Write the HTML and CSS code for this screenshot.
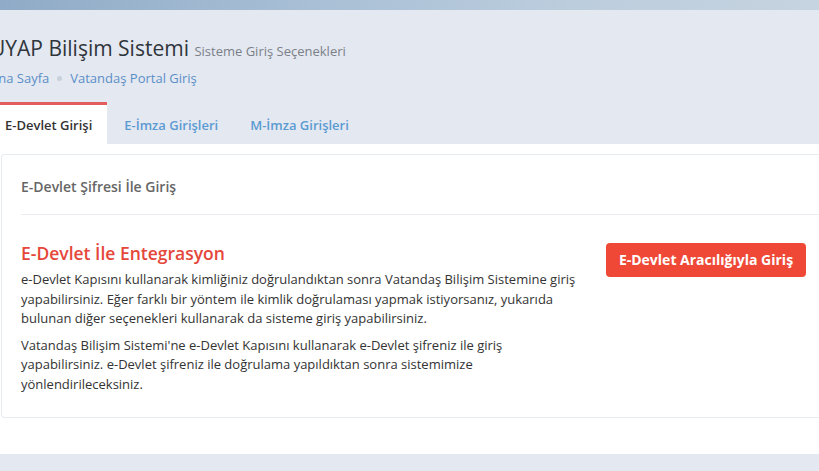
FILE: index.html
```html
<!DOCTYPE html>
<html lang="tr">
<head>
  <meta charset="UTF-8" />
  <meta name="viewport" content="width=device-width, initial-scale=1.0"/>
  <title>UYAP Bilişim Sistemi</title>
  <link rel="stylesheet" href="styles.css">
</head>
<body>
  <div class="top-band"></div>

  <div class="page">
    <!-- Page head -->
    <div class="page-head">
      <h1 class="page-title">UYAP Bilişim Sistemi <small>Sisteme Giriş Seçenekleri</small></h1>
      <ul class="breadcrumb">
        <li><a href="#">Ana Sayfa</a></li>
        <li class="dot"></li>
        <li><a href="#">Vatandaş Portal Giriş</a></li>
      </ul>
    </div>

    <!-- Tabs -->
    <ul class="nav-tabs">
      <li class="active"><a href="#">E-Devlet Girişi</a></li>
      <li><a href="#">E-İmza Girişleri</a></li>
      <li><a href="#">M-İmza Girişleri</a></li>
    </ul>

    <div class="tab-content">
      <div class="portlet">
        <div class="portlet-title">E-Devlet Şifresi İle Giriş</div>
        <div class="portlet-body">
          <div class="text-col">
            <h3 class="heading">E-Devlet İle Entegrasyon</h3>
            <p>e-Devlet Kapısını kullanarak kimliğiniz doğrulandıktan sonra Vatandaş Bilişim Sistemine giriş yapabilirsiniz. Eğer farklı bir yöntem ile kimlik doğrulaması yapmak istiyorsanız, yukarıda bulunan diğer seçenekleri kullanarak da sisteme giriş yapabilirsiniz.</p>
            <p>Vatandaş Bilişim Sistemi'ne e-Devlet Kapısını kullanarak e-Devlet şifreniz ile giriş yapabilirsiniz. e-Devlet şifreniz ile doğrulama yapıldıktan sonra sistemimize yönlendirileceksiniz.</p>
          </div>
          <div class="action-col">
            <a href="#" class="btn-red">E-Devlet Aracılığıyla Giriş</a>
          </div>
        </div>
      </div>
    </div>
  </div>
</body>
</html>
```

FILE: styles.css
```css
* {
  box-sizing: border-box;
}

body {
  margin: 0;
  background: #e4e8f1;
  font-family: 'Open Sans', sans-serif;
  color: #333;
  overflow: hidden;
}

a {
  text-decoration: none;
}

.top-band {
  height: 10px;
  background: linear-gradient(to right, #90abc7, #a9c0d6 40%, #bccddd 70%, #c6d3e0);
}

.page {
  margin-left: -10px;
  width: 840px;
}

.page-head {
  padding-top: 23px;
}

.page-title {
  margin: 0;
  font-size: 21px;
  font-weight: 400;
  line-height: 30px;
  color: #2f353b;
}

.page-title small {
  font-size: 13px;
  font-weight: 400;
  line-height: 1;
  color: #7b8088;
}

.breadcrumb {
  list-style: none;
  margin: 6px 0 0;
  padding: 0;
  display: flex;
  align-items: center;
  font-size: 13px;
  line-height: 18px;
}

.breadcrumb a {
  color: #5b8fc7;
}

.breadcrumb .dot {
  width: 5px;
  height: 5px;
  border-radius: 50%;
  background: #c8d0da;
  margin: 1px 8px 0 8px;
}

.nav-tabs {
  list-style: none;
  margin: 15px 0 0;
  padding: 0;
  display: flex;
  gap: 2px;
}

.nav-tabs a {
  display: block;
  padding: 11px 15px 10px;
  border-top: 3px solid transparent;
  font-size: 13px;
  font-weight: 600;
  line-height: 18px;
  color: #5b9bd1;
}

.nav-tabs .active a {
  background: #fff;
  border-top-color: #e35d5f;
  color: #333;
}

.tab-content {
  background: #fff;
  padding: 10px 0 36px 11px;
}

.portlet {
  border: 1px solid #e7ecf1;
  border-right: none;
  border-radius: 4px 0 0 4px;
  padding: 0 0 23px 19px;
}

.portlet-title {
  padding: 23px 0 18px;
  border-bottom: 1px solid #eaedf1;
  font-size: 14px;
  font-weight: 600;
  line-height: 18px;
  color: #666;
}

.portlet-body {
  display: flex;
  padding-top: 28px;
}

.text-col {
  width: 560px;
}

.heading {
  margin: 0 0 7px;
  font-size: 17.5px;
  font-weight: 600;
  line-height: 20px;
  color: #e5473b;
}

.text-col p {
  margin: 0 0 7px;
  font-size: 13px;
  line-height: 19.5px;
  color: #333;
}

.text-col p:last-child {
  margin-bottom: 0;
}

.action-col {
  padding-left: 25px;
}

.btn-red {
  display: block;
  width: 200px;
  height: 34px;
  line-height: 34px;
  text-align: center;
  background: #ef4836;
  color: #fff;
  font-size: 14px;
  font-weight: 700;
  border-radius: 4px;
}
```
